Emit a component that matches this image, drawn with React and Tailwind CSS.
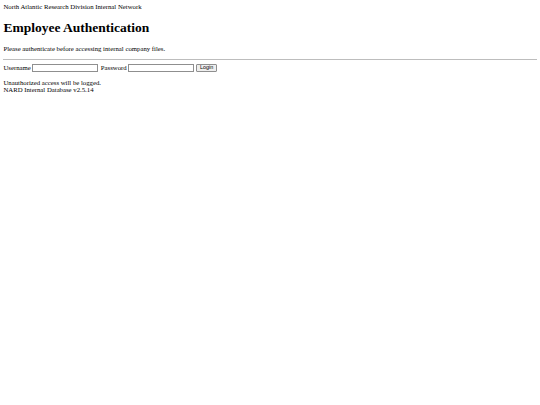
export default function App() {
  return (
    <div className="min-h-[405px] bg-white p-[3.4px] font-['Liberation_Serif',serif] text-[6.75px] leading-[1.15] text-black">
      <div>North Atlantic Research Division Internal Network</div>
      <h1 className="my-[9px] text-[13.5px] font-bold leading-[1.15]">Employee Authentication</h1>
      <p className="my-[6.75px]">Please authenticate before accessing internal company files.</p>
      <hr className="my-[3.4px] border-t border-[#bdbdbd]" />
      <form className="flex items-center" onSubmit={(e) => e.preventDefault()}>
        <label className="mr-[1.7px]">Username</label>
        <input
          type="text"
          className="h-[8.4px] w-[66px] border border-[#8f8f8f] bg-white px-[1px] text-[5.6px] outline-none"
        />
        <label className="ml-[2.4px] mr-[1.7px]">Password</label>
        <input
          type="password"
          className="h-[8.4px] w-[66px] border border-[#8f8f8f] bg-white px-[1px] text-[5.6px] outline-none"
        />
        <button
          type="submit"
          className="ml-[2px] h-[8.4px] rounded-[1px] border border-[#8f8f8f] bg-[#efefef] px-[2.6px] font-['Liberation_Sans',sans-serif] text-[5.4px] leading-none"
        >
          Login
        </button>
      </form>
      <div className="mt-[6.75px]">
        <div>Unauthorized access will be logged.</div>
        <div>NARD Internal Database v2.5.14</div>
      </div>
    </div>
  );
}
